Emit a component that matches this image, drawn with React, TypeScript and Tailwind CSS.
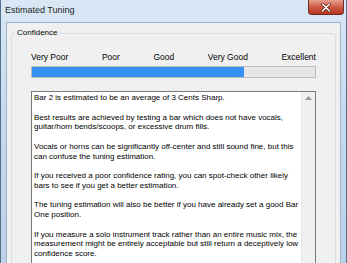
const paragraphs: string[][] = [
  ['Bar 2 is estimated to be an average of 3 Cents Sharp.'],
  [
    'Best results are achieved by testing a bar which does not have vocals,',
    'guitar/horn bends/scoops, or excessive drum fills.',
  ],
  [
    'Vocals or horns can be significantly off-center and still sound fine, but this',
    'can confuse the tuning estimation.',
  ],
  [
    'If you received a poor confidence rating, you can spot-check other likely',
    'bars to see if you get a better estimation.',
  ],
  [
    'The tuning estimation will also be better if you have already set a good Bar',
    'One position.',
  ],
  [
    'If you measure a solo instrument track rather than an entire music mix, the',
    'measurement might be entirely acceptable but still return a deceptively low',
    'confidence score.',
  ],
];

const levels = ['Very Poor', 'Poor', 'Good', 'Very Good', 'Excellent'];

const App = () => {
  return (
    <div className="w-[347px] h-[263px] overflow-hidden flex flex-col bg-gradient-to-b from-[#dae7f5] via-[#c4d8ee] to-[#bcd2ea] border-l border-r border-[#53708f] font-['Liberation_Sans',Arial,sans-serif] text-black">
      {/* Title bar */}
      <div className="h-[22px] shrink-0 flex items-start justify-between">
        <span className="pl-[4px] pt-[5px] text-[9px] leading-[11px] text-[#1e1e1e]">
          Estimated Tuning
        </span>
        <button className="mr-[2px] w-[36px] h-[15px] rounded-b-[4px] border border-t-0 border-[#6e2a22] bg-gradient-to-b from-[#e7a08f] via-[#cf5a45] to-[#b8371f] flex items-center justify-center">
          <svg width="10" height="9" viewBox="0 0 10 9">
            <path d="M1.5 1 L8.5 8 M8.5 1 L1.5 8" stroke="#5a1a12" strokeWidth="3" strokeLinecap="round" />
            <path d="M1.5 1 L8.5 8 M8.5 1 L1.5 8" stroke="#ffffff" strokeWidth="1.6" strokeLinecap="round" />
          </svg>
        </button>
      </div>

      {/* Client area */}
      <div className="flex-1 flex px-[5px]">
        <div className="flex-1 flex flex-col bg-[#f0f0f0] border border-b-0 border-[#9fb3c9] px-[4px] pt-[5px]">
          <fieldset className="flex-1 flex flex-col border border-b-0 border-[#d5dfe5] rounded-t-[3px] px-[19px] pt-[14px]">
            <legend className="ml-[-16px] px-[2px] text-[8px] leading-[10px]">Confidence</legend>

            <div className="flex justify-between text-[8.5px] leading-[10px]">
              {levels.map((l) => (
                <span key={l}>{l}</span>
              ))}
            </div>

            <div className="mt-[4px] h-[12px] border border-[#bcbcbc] bg-[#e6e6e6]">
              <div className="h-full w-[75%] bg-[#3592f2]" />
            </div>

            <div className="mt-[13px] flex-1 flex border border-b-0 border-[#7a7a7a] bg-white">
              <div className="flex-1 pl-[2px] pt-[1px] text-[8px] leading-[9.75px] whitespace-nowrap">
                {paragraphs.map((p, i) => (
                  <div key={i} className="mb-[9.75px]">
                    {p.map((line) => (
                      <div key={line}>{line}</div>
                    ))}
                  </div>
                ))}
              </div>
              <div className="w-[14px] shrink-0 bg-[#f0f0f0] border-l border-[#e6e6e6] flex justify-center pt-[4px]">
                <svg width="7" height="4" viewBox="0 0 7 4">
                  <path d="M0 4 L3.5 0 L7 4 Z" fill="#9a9a9a" />
                </svg>
              </div>
            </div>
          </fieldset>
        </div>
      </div>
    </div>
  );
};

export default App;
